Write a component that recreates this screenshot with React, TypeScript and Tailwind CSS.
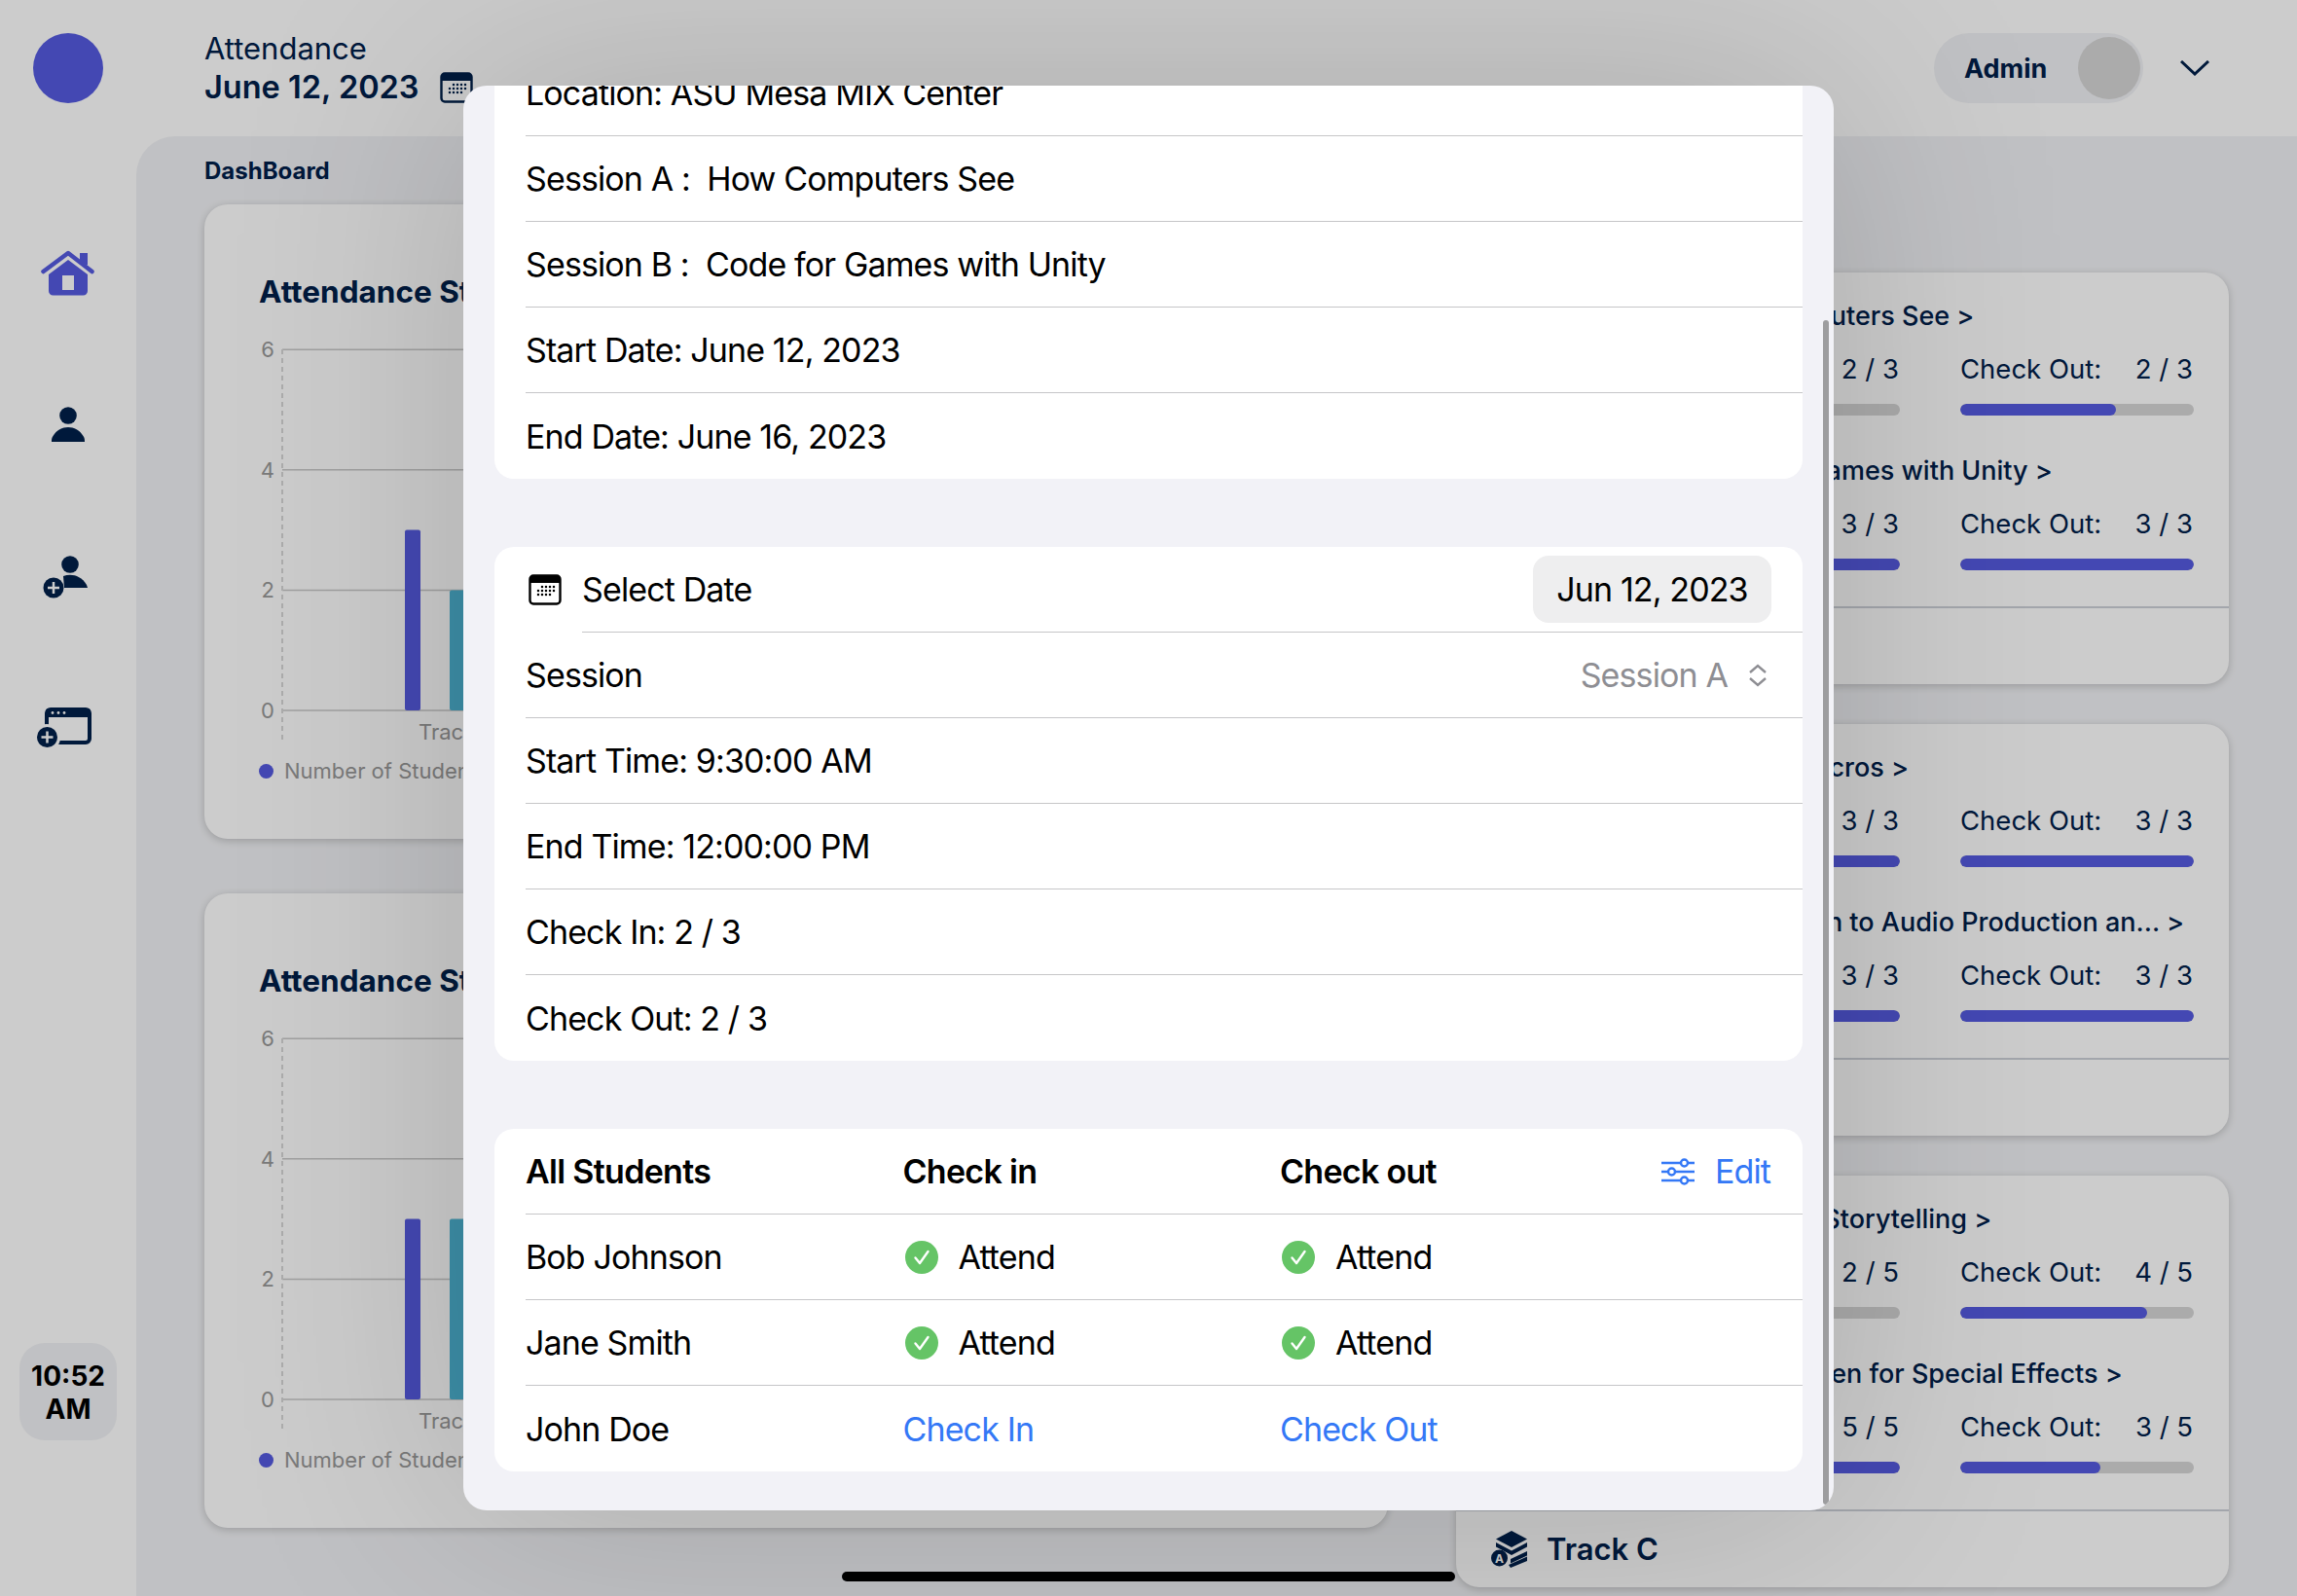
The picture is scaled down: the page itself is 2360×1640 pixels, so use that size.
import { ReactNode } from 'react'

const navy = 'text-[#00204a]'

function CalendarIcon({ className }: { className?: string }) {
  const dots = [
    [14, 13], [18, 13], [22, 13], [26, 13],
    [10, 17], [14, 17], [18, 17], [22, 17], [26, 17],
    [10, 21], [14, 21], [18, 21], [22, 21],
  ]
  return (
    <svg viewBox="0 0 34 32" className={className}>
      <rect x="1.5" y="1.5" width="31" height="29" rx="3.5" fill="none" stroke="currentColor" strokeWidth="2.4" />
      <path d="M1.5 5a3.5 3.5 0 0 1 3.5-3.5h24a3.5 3.5 0 0 1 3.5 3.5v4h-31z" fill="currentColor" />
      {dots.map(([x, y]) => (
        <circle key={`${x}-${y}`} cx={x} cy={y} r="1.25" fill="currentColor" />
      ))}
    </svg>
  )
}

function HomeIcon() {
  return (
    <svg viewBox="0 0 56 48" className="h-[48px] w-[56px] text-[#555be0]">
      <path d="M2.5 23 28 4l24.5 19" fill="none" stroke="currentColor" strokeWidth="4.5" strokeLinecap="round" strokeLinejoin="round" />
      <rect x="40" y="4" width="8" height="12" fill="currentColor" />
      <path fillRule="evenodd" d="M28 11l20 15v17a4.500 4.500 0 0 1-4.500 4.500H12.500A4.500 4.500 0 0 1 8 43V26zM22 27v15h12V27z" fill="currentColor" />
    </svg>
  )
}

function PersonIcon() {
  return (
    <svg viewBox="0 0 34 36" className="h-[36px] w-[34px] text-[#00204a]">
      <circle cx="17" cy="9" r="8.800" fill="currentColor" />
      <path d="M0 36c0-2 0-4 1.500-6C5 24 11 21 17 21s12 3 15.500 9c1.500 2 1.500 4 1.500 6z" fill="currentColor" />
    </svg>
  )
}

function PlusBadge({ cx, cy }: { cx: number; cy: number }) {
  return (
    <g>
      <circle cx={cx} cy={cy} r="10.500" fill="currentColor" />
      <path d={`M${cx - 6} ${cy}h12M${cx} ${cy - 6}v12`} stroke="#fff" strokeWidth="2.500" />
    </g>
  )
}

function AddPersonIcon() {
  return (
    <svg viewBox="0 0 46 44" className="h-[44px] w-[46px] text-[#00204a]">
      <circle cx="28" cy="9" r="8.800" fill="currentColor" />
      <path d="M21 21c8-3 18-1 24 9l1 3H22z" fill="currentColor" />
      <PlusBadge cx={11} cy={33} />
    </svg>
  )
}

function AddWindowIcon() {
  return (
    <svg viewBox="0 0 56 42" className="h-[42px] w-[56px] text-[#00204a]">
      <rect x="10" y="2" width="44" height="34" rx="4" fill="none" stroke="currentColor" strokeWidth="4" />
      <rect x="9" y="1" width="46" height="9" rx="3" fill="currentColor" />
      <circle cx="16" cy="5.500" r="1.400" fill="#fff" />
      <circle cx="22" cy="5.500" r="1.400" fill="#fff" />
      <circle cx="28" cy="5.500" r="1.400" fill="#fff" />
      <circle cx="10" cy="31" r="14" fill="#fff" />
      <PlusBadge cx={10.500} cy={30.500} />
    </svg>
  )
}

function TrackIcon() {
  return (
    <svg viewBox="0 0 38 38" className="h-[38px] w-[38px] text-[#00204a]">
      <path d="M21 0l16 8.500L21 17 5 8.500z" fill="currentColor" />
      <path d="M5 12l16 8.500 16-8.500v4.500l-16 8.500-6-3.200-10-5.300z" fill="currentColor" />
      <path d="M20 29l17-8v4.500L20 33.500z" fill="currentColor" />
      <path d="M18 35l19-8.500v4.500L20 38z" fill="currentColor" />
      <circle cx="8.500" cy="28" r="8.500" fill="currentColor" />
      <text x="8.500" y="32.500" textAnchor="middle" fontSize="12" fontWeight="700" fontFamily="Inter, sans-serif" fill="#fff">A</text>
    </svg>
  )
}

function SlidersIcon() {
  return (
    <svg viewBox="0 0 34 28" className="h-[28px] w-[34px]" fill="none" stroke="#3478f6" strokeWidth="2.400">
      <path d="M0 5h20M27 5h7M0 14h7M14 14h20M0 23h20M27 23h7" />
      <circle cx="23.500" cy="5" r="3.500" />
      <circle cx="10.500" cy="14" r="3.500" />
      <circle cx="23.500" cy="23" r="3.500" />
    </svg>
  )
}

function CheckBadge() {
  return (
    <svg viewBox="0 0 34 34" className="h-[34px] w-[34px]">
      <circle cx="17" cy="17" r="17" fill="#65c466" />
      <path d="M10.500 17.500l4.500 5.500 8.500-12" fill="none" stroke="#fff" strokeWidth="2.400" strokeLinecap="round" strokeLinejoin="round" />
    </svg>
  )
}

function AttendanceCard({ values }: { values: number[] }) {
  const unit = 61.8
  const lines = [6, 4, 2, 0]
  return (
    <div className="h-[652px] rounded-[24px] bg-white px-[56px] pt-[70px] shadow-[0_2px_8px_rgba(0,0,0,0.2)]">
      <div className={`whitespace-nowrap text-[31.500px] font-bold leading-[40px] ${navy}`}>Attendance Statistics</div>
      <svg width="1100" height="435" className="mt-[15px] block">
        {lines.map((n) => {
          const y = 395 - n * unit
          return (
            <g key={n}>
              <line x1="24" x2="1100" y1={y} y2={y} stroke="#c8c8c8" strokeWidth="1.500" />
              <text x="16" y={y + 8} textAnchor="end" fontSize="22" fill="#999" fontFamily="Inter, sans-serif">{n}</text>
            </g>
          )
        })}
        <line x1="24" x2="24" y1="24" y2="425" stroke="#d8d8d8" strokeWidth="2" strokeDasharray="5 4" />
        {values.map((v, i) => (
          <rect key={i} x={150 + i * 46} y={395 - v * unit} width="16" height={v * unit} rx="2" fill={i === 0 ? '#555be0' : '#4db3d2'} />
        ))}
        <text x="164" y="425" fontSize="22" fill="#999" fontFamily="Inter, sans-serif">Track A</text>
      </svg>
      <div className="mt-[7px] flex h-[30px] items-center gap-[11px] text-[22px] text-[#999]">
        <span className="h-[15px] w-[15px] rounded-full bg-[#555be0]" />
        Number of Students
      </div>
    </div>
  )
}

function Stat({ label, done, total }: { label: string; done: number; total: number }) {
  return (
    <div className="w-[240px]">
      <div className={`flex h-[36px] items-center justify-between pr-[1px] text-[27.500px] leading-[36px] ${navy}`}>
        <span>{label}</span>
        <span>{done} / {total}</span>
      </div>
      <div className="mt-[18px] h-[12px] overflow-hidden rounded-full bg-[#d6d6d6]">
        <div className="h-full rounded-full bg-[#555be0]" style={{ width: `${(done / total) * 100}%` }} />
      </div>
    </div>
  )
}

type Session = { title: string; checkIn: number; checkOut: number }

function TrackCard({ track, total, sessions }: { track: string; total: number; sessions: Session[] }) {
  return (
    <div className="h-[423px] rounded-[24px] bg-white shadow-[0_2px_8px_rgba(0,0,0,0.2)]">
      <div className="flex h-[343px] flex-col gap-[39px] px-9 pt-[27px]">
        {sessions.map((s) => (
          <div key={s.title}>
            <div className={`h-[36px] whitespace-nowrap pl-[63px] text-[27px] font-medium leading-[36px] ${navy}`}>{s.title} &gt;</div>
            <div className="mt-[18px] flex justify-end gap-[62px]">
              <Stat label="Check In:" done={s.checkIn} total={total} />
              <Stat label="Check Out:" done={s.checkOut} total={total} />
            </div>
          </div>
        ))}
      </div>
      <div className={`flex h-[80px] items-center gap-[19px] border-t-2 border-[#ccd0d8] px-9 text-[31px] font-semibold ${navy}`}>
        <TrackIcon />
        {track}
      </div>
    </div>
  )
}

function Row({ children, last }: { children: ReactNode; last?: boolean }) {
  return (
    <div className="flex h-[88px] items-center pl-[32px]">
      <div className={`flex h-full w-full items-center pr-[22px] ${last ? '' : 'border-b border-[#c6c6c8]'}`}>{children}</div>
    </div>
  )
}

function Cell({ children }: { children: ReactNode }) {
  return <div className="flex w-[387.500px] items-center">{children}</div>
}

function Head({ children }: { children: ReactNode }) {
  return <b className="font-semibold tracking-[-0.7px]">{children}</b>
}

function Attend() {
  return (
    <div className="flex items-center gap-[21px] pl-[2px]">
      <CheckBadge />
      Attend
    </div>
  )
}

export default function App() {
  return (
    <div className="relative flex h-[1640px] w-[2360px] overflow-hidden bg-white font-['Inter',sans-serif]">
      <aside className="flex w-[140px] shrink-0 flex-col items-center">
        <div className="mt-[34px] h-[72px] w-[72px] rounded-full bg-[#555be0]" />
        <div className="mt-[150px] flex h-[48px] items-center"><HomeIcon /></div>
        <div className="mt-[114px] flex h-[36px] items-center"><PersonIcon /></div>
        <div className="mt-[117px] -translate-x-[3px]"><AddPersonIcon /></div>
        <div className="mt-[112px] -translate-x-[4px]"><AddWindowIcon /></div>
        <div className="mt-[611px] flex h-[100px] w-[100px] flex-col items-center justify-center rounded-[26px] bg-[#f1f2f5] pt-[2px] text-[28px] font-bold leading-[34px] text-black">
          <span>10:52</span>
          <span>AM</span>
        </div>
      </aside>

      <main className="flex min-w-0 flex-1 flex-col">
        <header className="flex h-[140px] shrink-0 items-center pl-[70px] pr-[90px]">
          <div className={navy}>
            <div className="text-[31px] leading-[40px]">Attendance</div>
            <div className="flex items-center gap-[20px] text-[32.500px] font-semibold leading-[40px]">
              June 12, 2023
              <CalendarIcon className="h-[32px] w-[36px]" />
            </div>
          </div>
          <div className="ml-auto flex h-[72px] w-[215px] items-center justify-between rounded-full bg-[#f1f2f5] pl-[31px] pr-[3px]">
            <span className={`pt-[2px] text-[27px] font-bold ${navy}`}>Admin</span>
            <span className="h-[64px] w-[64px] rounded-full bg-[#d6d6d6]" />
          </div>
          <svg viewBox="0 0 30 16" className="ml-[38px] h-[16px] w-[30px]" fill="none" stroke="#00204a" strokeWidth="3">
            <path d="M1 1l14 13L29 1" />
          </svg>
        </header>

        <section className="min-h-0 flex-1 rounded-tl-[40px] bg-[#f1f2f5] pl-[70px] pr-[70px] pt-[21px]">
          <div className={`h-[30px] text-[24px] font-bold leading-[30px] ${navy}`}>DashBoard</div>
          <div className="mt-[19px] flex gap-[70px]">
            <div className="flex w-[1216px] flex-col gap-[56px]">
              <AttendanceCard values={[3, 2]} />
              <AttendanceCard values={[3, 3]} />
            </div>
            <div className="mt-[70px] flex w-[794px] flex-col gap-[41px]">
              <TrackCard
                track="Track A"
                total={3}
                sessions={[
                  { title: 'Session A: How Computers See', checkIn: 2, checkOut: 2 },
                  { title: 'Session B: Code for Games with Unity', checkIn: 3, checkOut: 3 },
                ]}
              />
              <TrackCard
                track="Track B"
                total={3}
                sessions={[
                  { title: 'Session A: Excel & Macros', checkIn: 3, checkOut: 3 },
                  { title: 'Session B: Introduction to Audio Production an...', checkIn: 3, checkOut: 3 },
                ]}
              />
              <TrackCard
                track="Track C"
                total={5}
                sessions={[
                  { title: 'Session A: Digital Art Storytelling', checkIn: 2, checkOut: 4 },
                  { title: 'Session B: Green Screen for Special Effects', checkIn: 5, checkOut: 3 },
                ]}
              />
            </div>
          </div>
        </section>
      </main>

      {/* dim layer + sheet */}
      <div className="absolute inset-0 flex items-center justify-center bg-black/20">
        <div className="relative h-[1464px] w-[1408px] overflow-hidden rounded-[24px] bg-[#f2f2f7] text-[34px] tracking-[-0.88px] text-black shadow-[0_0_240px_rgba(0,0,0,0.17)]">
          <div className="-mt-[36px] flex flex-col gap-[70px] px-[32px]">
            <div className="overflow-hidden rounded-b-[20px] bg-white">
              <Row>Location: ASU Mesa MIX Center</Row>
              <Row>Session A :&nbsp; How Computers See</Row>
              <Row>Session B :&nbsp; Code for Games with Unity</Row>
              <Row>Start Date: June 12, 2023</Row>
              <Row last>End Date: June 16, 2023</Row>
            </div>

            <div className="overflow-hidden rounded-[20px] bg-white">
              <div className="flex h-[88px] items-center pl-[35px]">
                <CalendarIcon className="h-[32px] w-[34px]" />
                <div className="ml-[21px] flex h-full flex-1 items-center justify-between border-b border-[#c6c6c8] pr-[32px]">
                  Select Date
                  <span className="flex h-[69px] w-[245px] items-center justify-center rounded-[16px] bg-[#eeeeef]">Jun 12, 2023</span>
                </div>
              </div>
              <Row>
                <span className="flex-1">Session</span>
                <span className="text-[#8e8e93]">Session A</span>
                <svg viewBox="0 0 20 24" className="ml-[21px] mr-[14px] h-[24px] w-[20px]" fill="none" stroke="#8e8e93" strokeWidth="2.400">
                  <path d="M2 9l8-7 8 7M2 15l8 7 8-7" />
                </svg>
              </Row>
              <Row>Start Time: 9:30:00 AM</Row>
              <Row>End Time: 12:00:00 PM</Row>
              <Row>Check In: 2 / 3</Row>
              <Row last>Check Out: 2 / 3</Row>
            </div>

            <div className="overflow-hidden rounded-[20px] bg-white">
              <Row>
                <Cell><Head>All Students</Head></Cell>
                <Cell><Head>Check in</Head></Cell>
                <Cell><Head>Check out</Head></Cell>
                <div className="ml-auto flex items-center gap-[21px] pr-[11px] text-[#3478f6]">
                  <SlidersIcon />
                  Edit
                </div>
              </Row>
              <Row>
                <Cell>Bob Johnson</Cell>
                <Cell><Attend /></Cell>
                <Cell><Attend /></Cell>
              </Row>
              <Row>
                <Cell>Jane Smith</Cell>
                <Cell><Attend /></Cell>
                <Cell><Attend /></Cell>
              </Row>
              <Row last>
                <Cell>John Doe</Cell>
                <Cell><span className="text-[#3478f6]">Check In</span></Cell>
                <Cell><span className="text-[#3478f6]">Check Out</span></Cell>
              </Row>
            </div>
          </div>
          {/* scroll thumb */}
          <div className="absolute bottom-[6px] right-[5px] top-[241px] w-[6px] rounded-full bg-[#9d9d9f]" />
        </div>
        {/* home indicator */}
        <div className="absolute bottom-[15px] left-[865px] h-[10px] w-[630px] rounded-full bg-black" />
      </div>
    </div>
  )
}
